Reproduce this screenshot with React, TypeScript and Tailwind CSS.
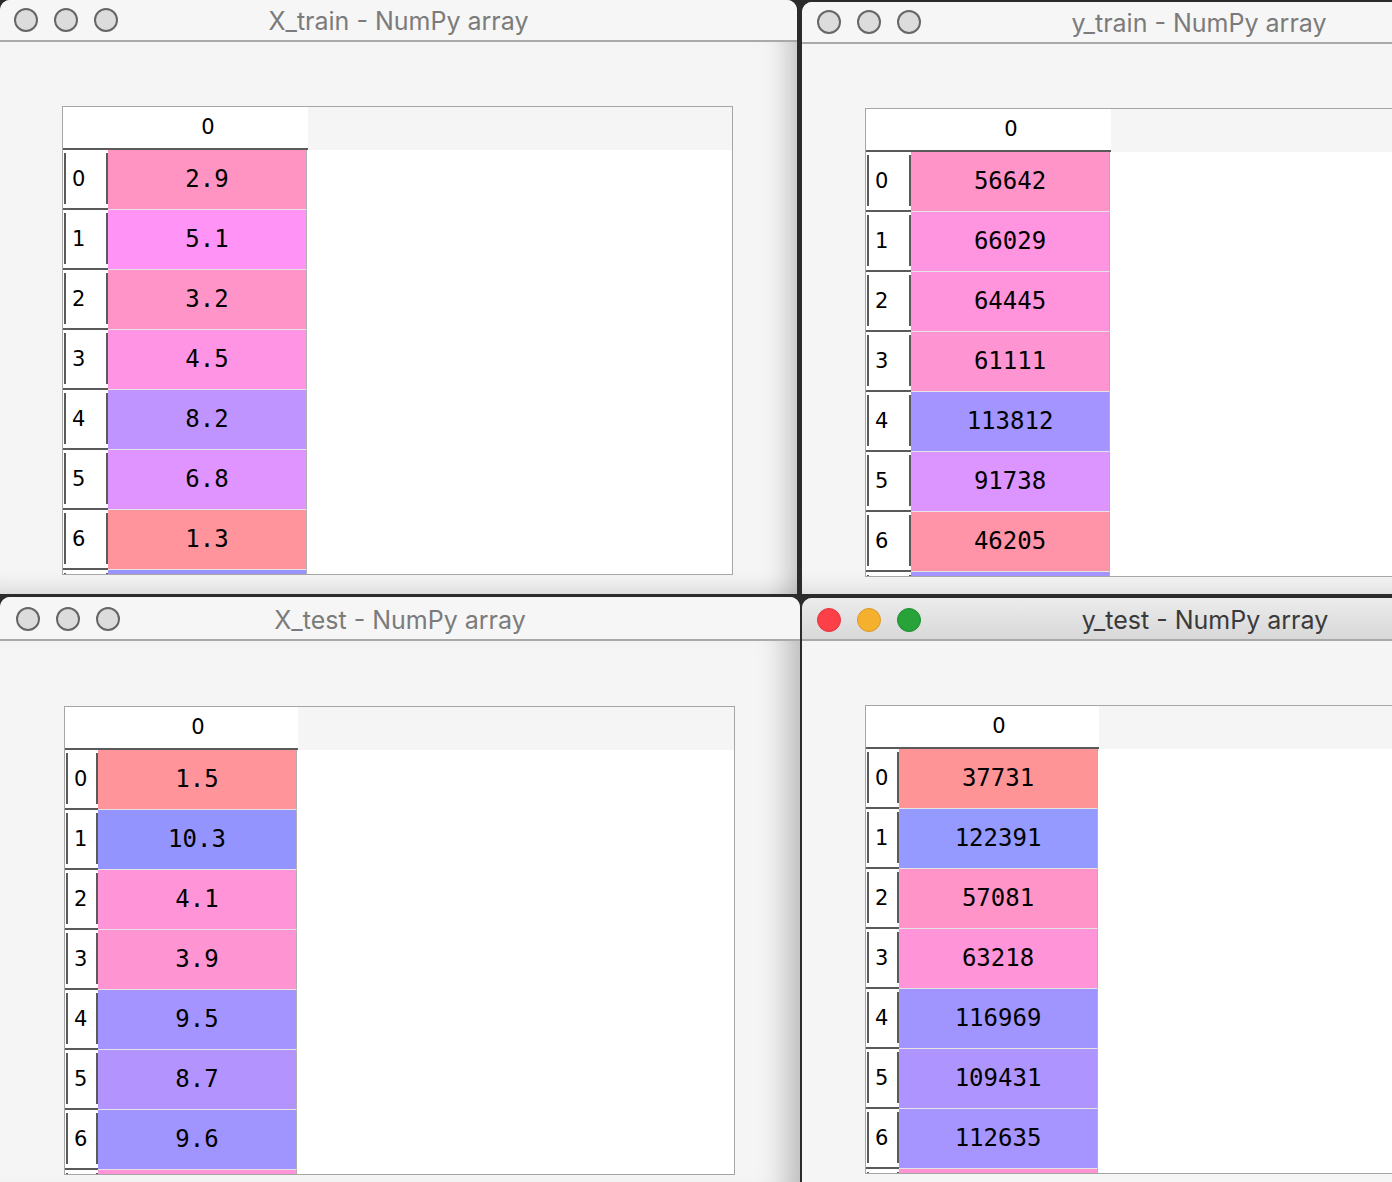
import React from 'react';

type Cell = [string, string];

interface TableProps {
    indexWidth: number;
    rows: Cell[];
}

const xTrain: Cell[] = [
    ['2.9', '#ff94c2'],
    ['5.1', '#ff94f6'],
    ['3.2', '#ff94c8'],
    ['4.5', '#ff94e4'],
    ['8.2', '#c094ff'],
    ['6.8', '#e094ff'],
    ['1.3', '#ff949c'],
    ['', '#9a94ff'],
];

const yTrain: Cell[] = [
    ['56642', '#ff94c8'],
    ['66029', '#ff94e0'],
    ['64445', '#ff94dc'],
    ['61111', '#ff94d2'],
    ['113812', '#a394ff'],
    ['91738', '#dc94ff'],
    ['46205', '#ff94a8'],
    ['', '#a394ff'],
];

const xTest: Cell[] = [
    ['1.5', '#ff949a'],
    ['10.3', '#9494ff'],
    ['4.1', '#ff94d8'],
    ['3.9', '#ff94d2'],
    ['9.5', '#a394ff'],
    ['8.7', '#b394ff'],
    ['9.6', '#a094ff'],
    ['', '#ff94d8'],
];

const yTest: Cell[] = [
    ['37731', '#ff9496'],
    ['122391', '#949aff'],
    ['57081', '#ff94c8'],
    ['63218', '#ff94d8'],
    ['116969', '#a094ff'],
    ['109431', '#ae94ff'],
    ['112635', '#a694ff'],
    ['', '#ff94d0'],
];

const ArrayTable: React.FC<TableProps> = ({ indexWidth, rows }) => {
    return (
        <div className="w-[671px] h-[469px] border border-[#a6a6a6] bg-white overflow-hidden">
            {/* header */}
            <div className="flex h-[43px]">
                <div className="flex bg-white border-b-2 border-[#5a5a5a]">
                    <div style={{ width: indexWidth }} />
                    <div className="w-[200px] flex items-center justify-center pt-[1px] text-[21px] text-black font-['DejaVu_Sans',sans-serif]">
                        0
                    </div>
                </div>
                <div className="flex-1 bg-[#f5f5f5]" />
            </div>
            {rows.map(([value, color], i) => (
                <div key={i} className="flex h-[60px]">
                    <div
                        className="flex flex-col bg-white border-b-2 border-[#5a5a5a] pt-[3px] pb-[4px]"
                        style={{ width: indexWidth }}
                    >
                        <div className="flex flex-1">
                            <div className="ml-[1px] w-[2px] bg-[#5a5a5a]" />
                            <div className="flex-1 flex items-center pl-[6px] pt-[2px] text-[21px] text-black font-['DejaVu_Sans',sans-serif]">
                                {value ? i : ''}
                            </div>
                            <div className="w-[2px] bg-[#5a5a5a]" />
                        </div>
                    </div>
                    <div
                        className="w-[199px] flex items-center justify-center pb-[2px] border-r border-[#b0b0b0] border-b border-b-[#e4e4e4] text-[24px] text-black font-['DejaVu_Sans_Mono',monospace]"
                        style={{ backgroundColor: color }}
                    >
                        {value}
                    </div>
                </div>
            ))}
        </div>
    );
};

const Lights: React.FC<{ active?: boolean }> = ({ active }) => {
    if (active) {
        return (
            <div className="flex gap-[16px]">
                <span className="w-[24px] h-[24px] rounded-full bg-[#fd4048] border border-[#e0353d]" />
                <span className="w-[24px] h-[24px] rounded-full bg-[#f5b02e] border border-[#d9992a]" />
                <span className="w-[24px] h-[24px] rounded-full bg-[#27a33a] border border-[#1f8c30]" />
            </div>
        );
    }
    return (
        <div className="flex gap-[16px]">
            <span className="w-[24px] h-[24px] rounded-full bg-[#dcdcdc] border-2 border-[#666]" />
            <span className="w-[24px] h-[24px] rounded-full bg-[#dcdcdc] border-2 border-[#666]" />
            <span className="w-[24px] h-[24px] rounded-full bg-[#dcdcdc] border-2 border-[#666]" />
        </div>
    );
};

interface WindowProps {
    title: string;
    active?: boolean;
    indexWidth: number;
    rows: Cell[];
    className: string;
    innerClass: string;
    titleClass: string;
    bodyClass: string;
}

const ArrayWindow: React.FC<WindowProps> = ({ title, active, indexWidth, rows, className, innerClass, titleClass, bodyClass }) => {
    return (
        <div className={`overflow-hidden rounded-tl-[10px] bg-[#f5f5f5] ${className}`}>
            <div className={`flex flex-col h-full ${innerClass}`}>
                <div
                    className={`flex items-center shrink-0 border-b-2 border-[#a9a9a9] ${titleClass} ${
                        active ? 'bg-gradient-to-b from-[#ececec] to-[#d8d8d8]' : 'bg-[#f6f6f6]'
                    }`}
                >
                    <Lights active={active} />
                    <div
                        className={`flex-1 text-center pt-[3px] text-[25px] font-['Inter',sans-serif] ${
                            active ? 'text-[#3a3a3a]' : 'text-[#7b7b7b]'
                        }`}
                    >
                        {title}
                    </div>
                </div>
                <div className={`flex-1 ${bodyClass}`}>
                    <ArrayTable indexWidth={indexWidth} rows={rows} />
                </div>
            </div>
        </div>
    );
};

export default function App() {
    return (
        <div className="w-[1392px] h-[1182px] bg-[#2b2b2b] flex flex-col gap-[3px] overflow-hidden">
            <div className="flex h-[594px] gap-[5px]">
                <ArrayWindow
                    title="X_train - NumPy array"
                    indexWidth={45}
                    rows={xTrain}
                    className="w-[797px] shrink-0 rounded-tr-[10px]"
                    innerClass="w-[797px]"
                    titleClass="h-[42px] pl-[14px] pr-[118px]"
                    bodyClass="pl-[62px] pt-[64px] shadow-[inset_-30px_0_26px_-22px_rgba(0,0,0,0.22),inset_0_-24px_20px_-18px_rgba(0,0,0,0.12)]"
                />
                <ArrayWindow
                    title="y_train - NumPy array"
                    indexWidth={45}
                    rows={yTrain}
                    className="flex-1 min-w-0 mt-[2px]"
                    innerClass="w-[794px]"
                    titleClass="h-[42px] pl-[15px] pr-[119px]"
                    bodyClass="pl-[63px] pt-[64px] shadow-[inset_0_-24px_20px_-18px_rgba(0,0,0,0.1)]"
                />
            </div>
            <div className="flex flex-1 gap-[2px]">
                <ArrayWindow
                    title="X_test - NumPy array"
                    indexWidth={33}
                    rows={xTest}
                    className="w-[800px] shrink-0 rounded-tr-[10px]"
                    innerClass="w-[800px]"
                    titleClass="h-[44px] pl-[16px] pr-[120px] pt-[2px]"
                    bodyClass="pl-[64px] pt-[65px] shadow-[inset_-36px_0_30px_-24px_rgba(0,0,0,0.25)]"
                />
                <ArrayWindow
                    title="y_test - NumPy array"
                    active
                    indexWidth={33}
                    rows={yTest}
                    className="flex-1 min-w-0 mt-[1px]"
                    innerClass="w-[806px]"
                    titleClass="h-[43px] pl-[15px] pr-[119px] pt-[2px]"
                    bodyClass="pl-[63px] pt-[64px]"
                />
            </div>
        </div>
    );
}
